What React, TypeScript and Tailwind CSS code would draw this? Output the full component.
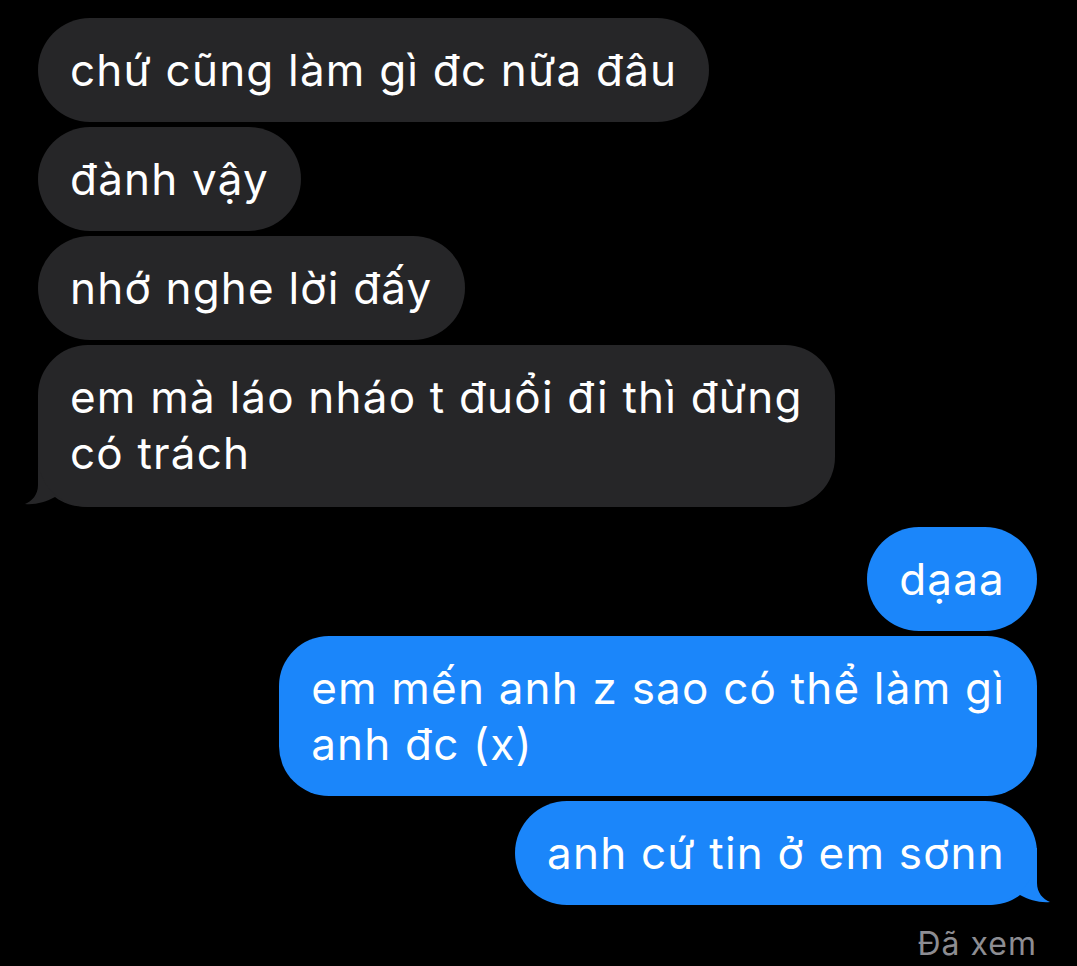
export default function App() {
  const font = { fontFamily: "Inter, 'Noto Sans', sans-serif" }

  return (
    <div className="min-h-[966px] w-full bg-black text-white pt-[18px] pb-4 px-[38px] pr-[40px]" style={font}>
      {/* Incoming */}
      <div className="flex flex-col items-start gap-[5px]">
        <div className="rounded-[52px] bg-[#262628] px-8 py-6 text-[44px] leading-[56px] tracking-[1.2px] whitespace-nowrap">
          chứ cũng làm gì đc nữa đâu
        </div>
        <div className="rounded-[52px] bg-[#262628] px-8 py-6 text-[44px] leading-[56px] tracking-[1.2px] whitespace-nowrap">
          đành vậy
        </div>
        <div className="rounded-[52px] bg-[#262628] px-8 py-6 text-[44px] leading-[56px] tracking-[1.2px] whitespace-nowrap">
          nhớ nghe lời đấy
        </div>
        <div className="relative">
          <svg className="absolute left-[-18px] bottom-[-1px]" width="70" height="58" viewBox="0 0 70 58">
            <path d="M18,0 L18,35 C18,45 12,51 5,54 C15,55 26,52 35,47 C43,53 52,57 70,57 L70,0 Z" fill="#262628" />
          </svg>
          <div className="relative rounded-[50px] bg-[#262628] px-8 pt-6 pb-[26px] text-[44px] leading-[56px] tracking-[1.2px] whitespace-nowrap">
            em mà láo nháo t đuổi đi thì đừng
            <br />
            có trách
          </div>
        </div>
      </div>

      {/* Outgoing */}
      <div className="mt-5 flex flex-col items-end gap-[5px]">
        <div className="rounded-[52px] bg-[#1b86fa] px-8 py-6 text-[44px] leading-[56px] tracking-[1.2px] whitespace-nowrap">
          dạaa
        </div>
        <div className="rounded-[50px] bg-[#1b86fa] px-8 py-6 text-[44px] leading-[56px] tracking-[1.2px] whitespace-nowrap">
          em mến anh z sao có thể làm gì
          <br />
          anh đc (x)
        </div>
        <div className="relative">
          <svg className="absolute right-[-18px] bottom-[-1px]" width="70" height="58" viewBox="0 0 70 58">
            <path d="M52,0 L52,35 C52,45 58,51 65,54 C55,55 44,52 35,47 C27,53 18,57 0,57 L0,0 Z" fill="#1b86fa" />
          </svg>
          <div className="relative rounded-[52px] bg-[#1b86fa] px-8 py-6 text-[44px] leading-[56px] tracking-[1.2px] whitespace-nowrap">
            anh cứ tin ở em sơnn
          </div>
        </div>
        <div className="mt-[16px] text-[32px] leading-[36px] tracking-[1px] text-[#8d8d92]">Đã xem</div>
      </div>
    </div>
  )
}
